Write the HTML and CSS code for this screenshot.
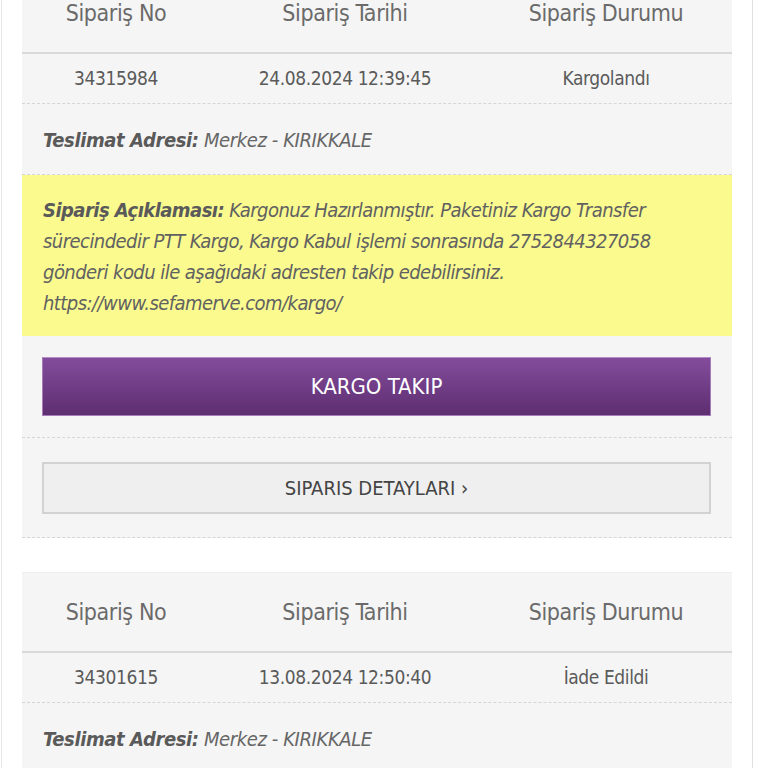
FILE: index.html
```html
<!DOCTYPE html>
<html lang="tr">
<head>
<meta charset="utf-8">
<title>Siparişlerim</title>
<link rel="stylesheet" href="styles.css">
</head>
<body>
<div class="page">
  <div class="order">
    <div class="row head">
      <div class="c1">Sipariş No</div>
      <div class="c2">Sipariş Tarihi</div>
      <div class="c3">Sipariş Durumu</div>
    </div>
    <div class="row data">
      <div class="c1">34315984</div>
      <div class="c2">24.08.2024 12:39:45</div>
      <div class="c3">Kargolandı</div>
    </div>
    <div class="address"><b>Teslimat Adresi:</b> Merkez - KIRIKKALE</div>
    <div class="note"><b>Sipariş Açıklaması:</b> Kargonuz Hazırlanmıştır. Paketiniz Kargo Transfer<br>sürecindedir PTT Kargo, Kargo Kabul işlemi sonrasında 2752844327058<br>gönderi kodu ile aşağıdaki adresten takip edebilirsiniz.<br>https://www.sefamerve.com/kargo/</div>
    <div class="action track-wrap"><a class="btn track" href="#">KARGO TAKIP</a></div>
    <div class="action detail-wrap"><a class="btn detail" href="#">SIPARIS DETAYLARI ›</a></div>
  </div>
  <div class="order">
    <div class="row head">
      <div class="c1">Sipariş No</div>
      <div class="c2">Sipariş Tarihi</div>
      <div class="c3">Sipariş Durumu</div>
    </div>
    <div class="row data">
      <div class="c1">34301615</div>
      <div class="c2">13.08.2024 12:50:40</div>
      <div class="c3">İade Edildi</div>
    </div>
    <div class="address"><b>Teslimat Adresi:</b> Merkez - KIRIKKALE</div>
  </div>
</div>
</body>
</html>
```

FILE: styles.css
```css
html, body {
  margin: 0;
  padding: 0;
  background: #ffffff;
  overflow: hidden;
}
body {
  font-family: "DejaVu Sans Condensed", "DejaVu Sans", sans-serif;
  font-stretch: condensed;
  color: #555555;
}
.page {
  width: 752px;
  margin-left: 1px;
  margin-top: -27px;
  border-left: 1px solid #e6e6e6;
  border-right: 1px solid #e0e0e0;
  padding: 0 20px 40px 20px;
  box-sizing: border-box;
  display: flex;
  flex-direction: column;
  gap: 34px;
  min-height: 900px;
}
.order {
  background: #f5f5f5;
  border-bottom: 1px dashed #d6d6d6;
  border-top: 1px solid #efefef;
}
.row {
  display: grid;
  grid-template-columns: 188px 270px 1fr;
  text-align: center;
}
.head {
  padding: 26px 0 26px;
  line-height: 26px;
  font-size: 23px;
  letter-spacing: -0.4px;
  color: #6a6a6a;
  border-bottom: 2px solid #d9d9d9;
}
.data {
  padding: 12px 0 12px;
  line-height: 25px;
  font-size: 19px;
  letter-spacing: -0.4px;
  color: #5a5a5a;
  border-bottom: 1px dashed #d6d6d6;
}
.address {
  padding: 24px 21px 22px;
  line-height: 24px;
  font-size: 20px;
  letter-spacing: -0.4px;
  font-style: italic;
  color: #666666;
  border-bottom: 1px dashed #d6d6d6;
}
.address b, .note b {
  font-weight: bold;
  color: #5a5a5a;
}
.note {
  background: #fafa8f;
  padding: 20px 21px 17px;
  line-height: 31px;
  font-size: 20px;
  letter-spacing: -0.55px;
  font-style: italic;
  color: #616161;
}
.action {
  padding: 21px 21px 21px 20px;
}
.track-wrap {
  border-bottom: 1px dashed #d6d6d6;
}
.detail-wrap {
  padding-top: 24px;
  padding-bottom: 23px;
}
.btn {
  display: flex;
  align-items: center;
  justify-content: center;
  text-decoration: none;
  box-sizing: border-box;
}
.track {
  height: 59px;
  font-size: 22px;
  color: #ffffff;
  background: linear-gradient(#834c9c, #5d2e70);
  border: 1px solid #a57bb8;
  border-top-color: #b58ac6;
}
.detail {
  height: 52px;
  font-size: 20px;
  color: #444444;
  background: #efefef;
  border: 2px solid #d2d2d2;
}
```
